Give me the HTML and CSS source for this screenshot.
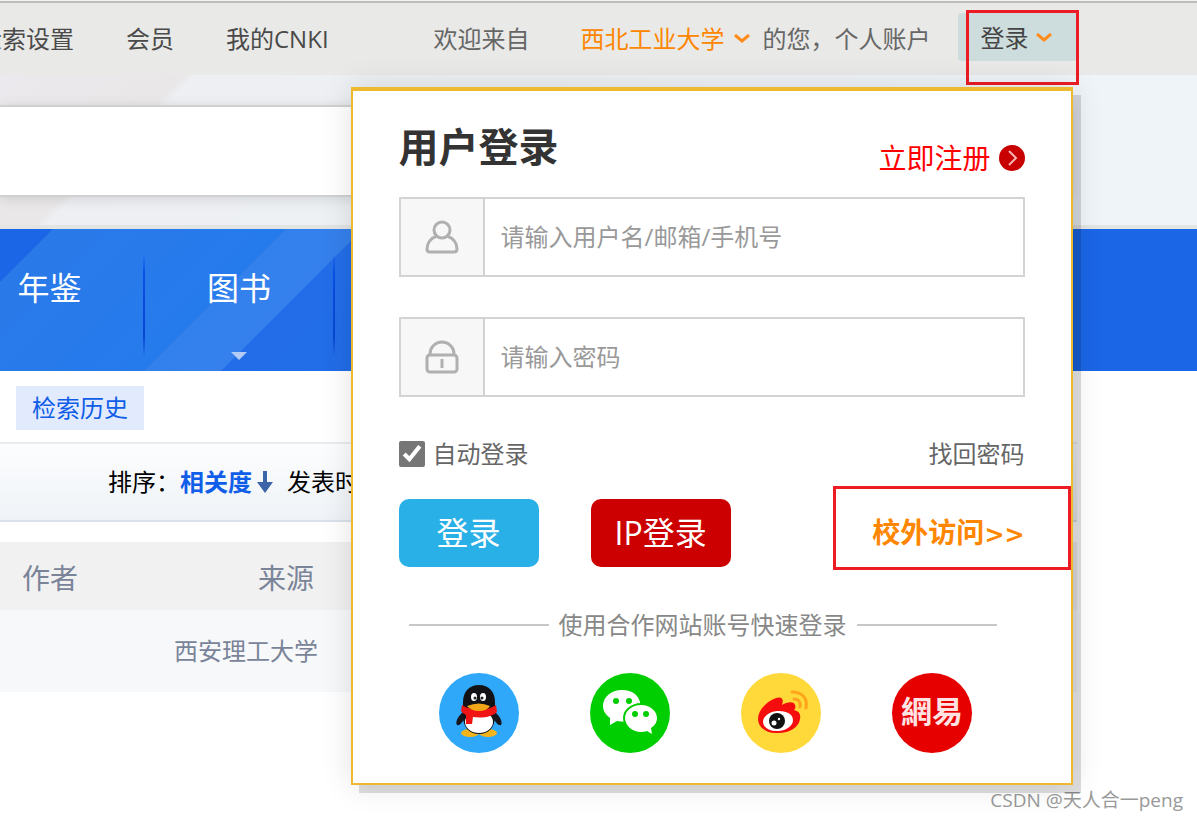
FILE: index.html
```html
<!DOCTYPE html>
<html lang="zh">
<head>
  <meta charset="UTF-8" />
  <meta name="viewport" content="width=device-width, initial-scale=1.0"/>
  <title>用户登录</title>
  <link rel="stylesheet" href="styles.css">
</head>
<body>

<!-- 顶部工具条 -->
<header class="topbar">
  <nav class="top-links">
    <a href="#">检索设置</a>
    <a href="#">会员</a>
    <a href="#">我的CNKI</a>
  </nav>
  <div class="welcome">
    <span>欢迎来自</span>
    <a class="school" href="#">西北工业大学
      <svg class="chevron" viewBox="0 0 18 10"><path d="M2 1l7 6 7-6"/></svg>
    </a>
    <span>的您，个人账户</span>
  </div>
  <div class="login-entry">
    <button class="login-toggle" type="button">登录
      <svg class="chevron" viewBox="0 0 18 10"><path d="M2 1l7 6 7-6"/></svg>
    </button>
    <div class="mark mark-entry"></div>

    <!-- 登录弹层 -->
    <form class="login-box">
      <div class="login-head">
        <h2>用户登录</h2>
        <a class="register" href="#">立即注册
          <svg viewBox="0 0 26 26"><circle cx="13" cy="13" r="13" fill="#c80000"/><path d="M10 6l7 7-7 7" fill="none" stroke="#f6b5b5" stroke-width="2"/></svg>
        </a>
      </div>
      <div class="field">
        <label for="username" aria-label="用户名">
          <svg viewBox="0 0 34 34"><circle cx="17" cy="10" r="8"/><path d="M12 16C6 18 2 23 2 29q0 3 3 3h24q3 0 3-3c0-6-4-11-10-13"/></svg>
        </label>
        <input type="text" id="username" placeholder="请输入用户名/邮箱/手机号">
      </div>
      <div class="field">
        <label for="password" aria-label="密码">
          <svg viewBox="0 0 34 34"><path d="M5 15v-1a12 12 0 0 1 24 0v1"/><rect x="2" y="15" width="30" height="17" rx="3"/><path class="keyhole" d="M17 19v9"/></svg>
        </label>
        <input type="password" id="password" placeholder="请输入密码">
      </div>
      <div class="options">
        <label class="remember" for="auto"><input type="checkbox" id="auto" checked>自动登录</label>
        <a href="#">找回密码</a>
      </div>
      <div class="actions">
        <button class="btn" type="button">登录</button>
        <button class="btn btn-ip" type="button">IP登录</button>
        <a class="outside" href="#">校外访问<span class="arrows">&gt;&gt;</span></a>
        <div class="mark mark-outside"></div>
      </div>
      <div class="divider">使用合作网站账号快速登录</div>
      <div class="social">
        <a href="#" aria-label="QQ">
          <svg viewBox="0 0 80 80">
            <circle cx="40" cy="40" r="40" fill="#2fa8fa"/>
            <ellipse cx="31" cy="60" rx="9" ry="4" fill="#f5b51a"/>
            <ellipse cx="49" cy="60" rx="9" ry="4" fill="#f5b51a"/>
            <path d="M25 38C19 43 16 49 18 52c2 1 5-2 7-6zM55 38c6 5 9 11 7 14-2 1-5-2-7-6z" fill="#15151b"/>
            <path d="M40 12c-10 0-16 7-16 17v14c0 11 6 18 16 18s16-7 16-18V29c0-10-6-17-16-17z" fill="#111116"/>
            <ellipse cx="40" cy="49" rx="14" ry="11" fill="#fff"/>
            <path d="M23 32c8 6 26 6 34 0l1 7c-6 6-17 6-24 5l-1 7h-6v-9q-4-2-5-4z" fill="#f01414"/>
            <ellipse cx="35" cy="24" rx="3" ry="4" fill="#fff"/>
            <ellipse cx="44" cy="24" rx="3" ry="4" fill="#fff"/>
            <circle cx="36" cy="25" r="1.500" fill="#222"/>
            <circle cx="43" cy="25" r="1.500" fill="#222"/>
            <path d="M28 33q12-5 23 0-3 5-11 5t-12-5z" fill="#f3a718"/>
          </svg>
        </a>
        <a href="#" aria-label="微信">
          <svg viewBox="0 0 80 80">
            <circle cx="40" cy="40" r="40" fill="#00ce00"/>
            <path d="M32 17c-11 0-19 7-19 16 0 5 3 9 7 12v7l7-4q15 3 21-5 6-14-3-22-5-4-13-4z" fill="#fff"/>
            <ellipse cx="51" cy="45" rx="18" ry="15" fill="#00ce00"/>
            <path d="M51 32c-9 0-16 6-16 13s7 14 16 14q4 0 6-1l5 3-1-6q6-4 6-10c0-7-7-13-16-13z" fill="#fff"/>
            <g fill="#00ce00"><circle cx="26" cy="28" r="3"/><circle cx="39" cy="28" r="3"/><circle cx="45" cy="41" r="3"/><circle cx="56" cy="41" r="3"/></g>
          </svg>
        </a>
        <a href="#" aria-label="微博">
          <svg viewBox="0 0 80 80">
            <circle cx="40" cy="40" r="40" fill="#ffd83a"/>
            <path d="M17 46c0-9 9-18 18-21 6-2 8 1 6 7 5-3 12-4 13 0 1 2 0 4-1 5 5 1 7 4 6 9-1 8-10 14-22 14-12 1-20-6-20-14z" fill="#f50d0d"/>
            <ellipse cx="37" cy="48" rx="15" ry="10" fill="#fff" transform="rotate(-6 37 48)"/>
            <circle cx="36" cy="48" r="8" fill="#111"/>
            <circle cx="33" cy="50" r="2.500" fill="#fff"/><circle cx="38" cy="46" r="1.200" fill="#fff"/>
            <path d="M53 26c5 0 7 4 6 8M51 19c10 0 16 6 14 16" fill="none" stroke="#ffa41b" stroke-width="3" stroke-linecap="round"/>
          </svg>
        </a>
        <a href="#" aria-label="网易">
          <svg viewBox="0 0 80 80"><circle cx="40" cy="40" r="40" fill="#e60000"/><text class="netease" x="40" y="50" text-anchor="middle">網易</text></svg>
        </a>
      </div>
    </form>
  </div>
</header>

<!-- 检索框 -->
<section class="search-area">
  <div class="search-box"></div>
</section>

<!-- 文献类型 -->
<nav class="types">
  <a href="#">年鉴</a>
  <a class="has-more" href="#">图书</a>
</nav>

<main class="content">
  <div class="history"><a href="#">检索历史</a></div>
  <div class="sort">
    <span>排序：</span>
    <a class="current" href="#">相关度</a>
    <svg viewBox="0 0 16 22"><path d="M6 0h4v11h6l-8 11-8-11h6z" fill="#3c64a8"/></svg>
    <a href="#">发表时间</a>
  </div>
  <table class="results">
    <thead><tr><th>作者</th><th class="source">来源</th></tr></thead>
    <tbody><tr><td></td><td>西安理工大学</td></tr></tbody>
  </table>
</main>

<div class="watermark">CSDN @天人合一peng</div>

</body>
</html>
```
FILE: styles.css
```css
* {
  margin: 0;
  padding: 0;
  box-sizing: border-box;
}
body {
  min-height: 100vh;
  background: #fff;
  color: #666;
  font-family: "Open Sans", "Noto Sans CJK SC", sans-serif;
  font-size: 24px;
  line-height: 36px;
  position: relative;
  overflow: hidden;
}
a {
  color: inherit;
  text-decoration: none;
}
button, input {
  font: inherit;
  border: none;
  outline: none;
}
svg {
  display: block;
  flex: none;
}

/* 顶部工具条 */
.topbar {
  height: 75px;
  padding-top: 2px;
  background: #e9e9e7;
  border-top: 1px solid #f4f4f4;
  box-shadow: inset 0 2px #bdbebc;
  display: flex;
  align-items: center;
  white-space: nowrap;
}
.top-links {
  display: flex;
  gap: 52px;
  margin-left: -22px;
  color: #4a4a4a;
}
.welcome {
  display: flex;
  margin-left: 105px;
}
.school {
  display: flex;
  align-items: center;
  gap: 8px;
  margin: 0 12px 0 51px;
  color: #ff8600;
}
.chevron {
  width: 18px;
  height: 10px;
  fill: none;
  stroke: #ff8c1a;
  stroke-width: 3;
}
.login-entry {
  position: relative;
  margin-left: 27px;
}
.login-toggle {
  display: flex;
  align-items: center;
  gap: 6px;
  width: 120px;
  height: 48px;
  margin-bottom: 4px;
  padding: 2px 0 0 23px;
  border-radius: 4px;
  background: #cddddd;
  color: #444;
  cursor: pointer;
}

/* 红框标注 */
.mark {
  position: absolute;
  border: 3px solid #ed1c24;
  pointer-events: none;
}
.mark-entry {
  top: -3px;
  left: 8px;
  width: 113px;
  height: 75px;
}
.mark-outside {
  top: -13px;
  right: -46px;
  width: 238px;
  height: 84px;
}

/* 登录弹层 */
.login-box {
  position: absolute;
  top: 74px;
  right: 5px;
  z-index: 10;
  width: 722px;
  padding: 32px 46px 30px;
  background: #fff;
  border: 2px solid #edb92e;
  border-top-width: 4px;
  box-shadow: 8px 8px rgba(0,0,0,0.13), 0 0 30px rgba(0,0,0,0.12);
}
.login-head {
  display: flex;
  justify-content: space-between;
  height: 74px;
}
.login-head h2 {
  color: #333;
  font-size: 40px;
  line-height: 48px;
  font-weight: 700;
}
.register {
  display: flex;
  align-items: center;
  gap: 8px;
  height: 70px;
  color: #f00;
  font-size: 28px;
}
.register svg {
  width: 26px;
  height: 26px;
}
.field {
  display: flex;
  height: 80px;
  margin-bottom: 40px;
  border: 2px solid #d3d3d3;
}
.field label {
  display: flex;
  align-items: center;
  justify-content: center;
  width: 84px;
  background: #f7f7f7;
  border-right: 2px solid #d3d3d3;
}
.field svg {
  width: 34px;
  height: 34px;
  fill: none;
  stroke: #b0b0b0;
  stroke-width: 3;
}
.field input {
  flex: 1;
  min-width: 0;
  padding: 0 16px;
  background: #fff;
  color: #666;
}
.field input::placeholder {
  color: #999;
  opacity: 1;
}
.options {
  display: flex;
  justify-content: space-between;
  align-items: center;
  margin: -1px 0 27px;
}
.remember {
  display: flex;
  align-items: center;
  gap: 8px;
}
.remember input {
  width: 26px;
  height: 26px;
  accent-color: #767676;
}
.actions {
  position: relative;
  display: flex;
  align-items: center;
}
.btn {
  width: 140px;
  height: 68px;
  margin-right: 52px;
  border-radius: 10px;
  background: #29b0e7;
  color: #fff;
  font-size: 32px;
  cursor: pointer;
}
.btn-ip {
  background: #c00;
}
.outside {
  margin-left: auto;
  color: #ff8600;
  font-size: 28px;
  font-weight: 700;
}
.arrows {
  font-family: "DejaVu Sans", sans-serif;
  font-size: 24px;
}
.divider {
  display: flex;
  align-items: center;
  gap: 10px;
  margin: 40px 28px 30px 10px;
  color: #888;
  white-space: nowrap;
}
.divider::before,
.divider::after {
  content: "";
  flex: 1;
  height: 2px;
  background: #c8c8c8;
}
.social {
  display: flex;
  gap: 71px;
  padding-left: 40px;
}
.social svg {
  width: 80px;
  height: 80px;
}
.netease {
  fill: #ffe3e3;
  font-family: "Noto Sans CJK TC", sans-serif;
  font-size: 31px;
  font-weight: 700;
}

/* 检索框 */
.search-area {
  height: 154px;
  padding: 30px 128px 32px 0;
  background: linear-gradient(135deg, #ebe9ed 0, #e9e7e7 130px, #edeff3 138px, #eef1f4 400px, #eff4f9 680px);
  box-shadow: inset 0 -4px #e3e4e4;
}
.search-box {
  height: 92px;
  background: #fff;
  border: 2px solid #d0d0d0;
  border-left: none;
  box-shadow: 0 2px 12px rgba(0,0,0,0.12);
}

/* 文献类型 */
.types {
  display: flex;
  height: 142px;
  padding-top: 25px;
  background: linear-gradient(135deg, #1b66e6 37px, #2a79e9 38px, #267bec 202px, #3381ed 203px, #3580ec 256px, #236ee8 257px, #1b66e6 600px);
  color: #fff;
  font-size: 32px;
}
.types a {
  position: relative;
  width: 190px;
  height: 102px;
  padding-top: 16px;
  text-align: center;
  border-right: 2px solid;
  border-image: linear-gradient(transparent, #0a50e6 20%, #0747d0 80%, transparent) 1;
}
.types a:first-child {
  width: 145px;
  padding-right: 44px;
}
.types .has-more::after {
  content: "";
  position: absolute;
  bottom: -4px;
  left: 86px;
  border: 8px solid transparent;
  border-top-color: #b3ccf5;
  border-bottom: none;
}

/* 检索结果 */
.history {
  padding: 15px 16px 12px;
  display: flex;
}
.history a {
  padding: 4px 16px;
  background: #e1ebfd;
  color: #0f5de8;
}
.sort {
  display: flex;
  align-items: center;
  height: 80px;
  margin-right: 120px;
  padding-left: 108px;
  border-top: 2px solid #ececec;
  border-bottom: 2px solid #dae1ea;
  background: linear-gradient(#fcfdfe, #eff3f7);
  color: #000;
}
.sort .current {
  color: #0f5de8;
  font-weight: 700;
}
.sort svg {
  width: 16px;
  height: 22px;
  margin: 0 14px 0 5px;
}
.results {
  width: calc(100% - 120px);
  margin-top: 20px;
  border-collapse: collapse;
  table-layout: fixed;
  color: #7a8499;
  text-align: left;
}
.results th {
  height: 68px;
  padding: 4px 0 0 22px;
  background: #f1f1f1;
  font-size: 28px;
  font-weight: 400;
}
.results th:first-child {
  width: 174px;
}
.results th.source {
  padding-left: 84px;
}
.results td {
  height: 82px;
  background: #f7f8fa;
}

.watermark {
  position: absolute;
  right: 14px;
  bottom: 6px;
  color: #999;
  font-size: 19px;
  line-height: 28px;
}
```
